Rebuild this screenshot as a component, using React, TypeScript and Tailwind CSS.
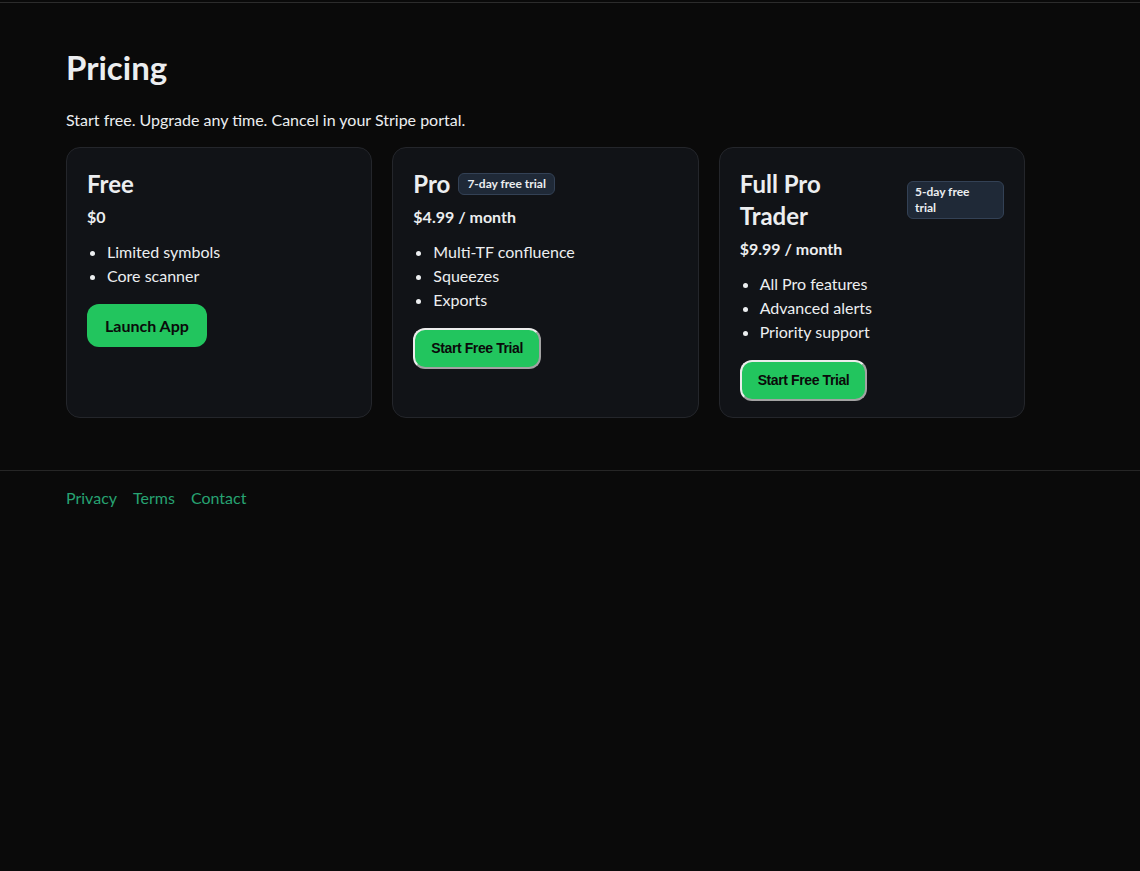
import React from "react";

type Plan = {
  name: string;
  price: string;
  badge?: string;
  badgeClass?: string;
  badgeInner?: string;
  titleClass?: string;
  features: string[];
  cta: "launch" | "trial";
};

const plans: Plan[] = [
  { name: "Free", price: "$0", features: ["Limited symbols", "Core scanner"], cta: "launch" },
  {
    name: "Pro",
    price: "$4.99 / month",
    badge: "7-day free trial",
    badgeClass: "shrink-0 px-2",
    badgeInner: "",
    titleClass: "",
    features: ["Multi-TF confluence", "Squeezes", "Exports"],
    cta: "trial",
  },
  {
    name: "Full Pro Trader",
    price: "$9.99 / month",
    badge: "5-day free trial",
    badgeClass: "ml-auto w-[97px] shrink-0 px-[7px]",
    badgeInner: "block max-w-[64px]",
    titleClass: "w-[140px] shrink-0",
    features: ["All Pro features", "Advanced alerts", "Priority support"],
    cta: "trial",
  },
];

function PlanCard({ plan }: { plan: Plan }) {
  return (
    <div className="rounded-[14px] border border-[#24262b] bg-[#111317] px-5 pt-5 pb-4">
      <div className="flex items-center gap-2">
        <h3 className={`${plan.titleClass ?? ""} text-[24px] font-bold leading-8 text-[#eceef0]`}>
          {plan.name}
        </h3>
        {plan.badge && (
          <span
            className={`${plan.badgeClass} rounded-md border border-[#334155] bg-[#1f2937] py-0.5 text-[12px] font-bold leading-4 text-[#eceef0]`}
          >
            <span className={plan.badgeInner}>{plan.badge}</span>
          </span>
        )}
      </div>
      <div className="mt-[5px] text-[16px] font-bold leading-6 text-[#eceef0]">{plan.price}</div>
      <ul className="mt-[11px] list-disc pl-5 text-[16px] leading-6 text-[#eceef0]">
        {plan.features.map((f) => (
          <li key={f}>{f}</li>
        ))}
      </ul>
      {plan.cta === "launch" ? (
        <button className="mt-4 h-[43px] rounded-xl bg-[#22c55e] px-[18px] text-[16px] font-bold text-[#0a0a0a]">
          Launch App
        </button>
      ) : (
        <button className="mt-4 h-[41px] rounded-xl border-2 border-t-[#ececec] border-l-[#ececec] border-r-[#a3a3a3] border-b-[#a3a3a3] bg-[#22c55e] px-4 font-['Liberation_Sans',Arial,sans-serif] text-[14px] font-bold tracking-[-0.4px] text-[#0a0a0a]">
          Start Free Trial
        </button>
      )}
    </div>
  );
}

export default function App() {
  return (
    <div className="min-h-[871px] bg-[#0a0a0a] font-['Lato','Noto_Sans',sans-serif] text-[#eceef0]">
      <div className="h-[3px] border-b border-[#2c2c2c]" />
      <main className="px-[66px] pt-[44px] pb-[52px]">
        <h1 className="text-[33px] font-bold leading-10 text-[#eceef0]">Pricing</h1>
        <p className="mt-[21px] text-[16px] leading-6">
          Start free. Upgrade any time. Cancel in your Stripe portal.
        </p>
        <div className="mt-[15px] grid w-[959px] grid-cols-3 gap-5">
          {plans.map((p) => (
            <PlanCard key={p.name} plan={p} />
          ))}
        </div>
      </main>
      <footer className="border-t border-[#262626] px-[66px] pt-[15px]">
        <nav className="flex gap-4 text-[16px] leading-6 text-[#27a372]">
          <a href="#">Privacy</a>
          <a href="#">Terms</a>
          <a href="#">Contact</a>
        </nav>
      </footer>
    </div>
  );
}
